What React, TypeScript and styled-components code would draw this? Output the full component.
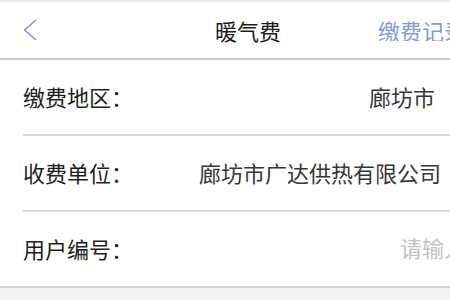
import styled, { createGlobalStyle } from 'styled-components';

const GlobalStyle = createGlobalStyle`
  html, body {
    margin: 0;
    padding: 0;
    background: #f1f1f1;
    overflow: hidden;
  }
  * {
    box-sizing: border-box;
  }
`;

const Page = styled.div`
  width: 450px;
  height: 300px;
  overflow: hidden;
  background: #f1f1f1;
  font-family: 'Noto Sans CJK SC', 'Noto Sans', sans-serif;
  border-top: 2px solid #e9e9e9;
`;

const NavBar = styled.div`
  height: 58px;
  display: grid;
  grid-template-columns: 192px 163px 1fr;
  align-items: center;
  padding-left: 23px;
  background: #fff;
  border-bottom: 2px solid #c9c9c9;
`;

const BackButton = styled.button`
  display: flex;
  align-items: center;
  width: 20px;
  height: 30px;
  padding: 0;
  border: none;
  background: none;
  color: #8394c3;
`;

const Title = styled.div`
  font-size: 22px;
  line-height: 1;
  color: #1c1c1c;
`;

const NavLink = styled.div`
  font-size: 22px;
  line-height: 1;
  color: #859bd0;
  white-space: nowrap;
  overflow: hidden;
`;

const Form = styled.div`
  background: #fff;
  border-bottom: 2px solid #d5d5d5;
`;

const Row = styled.div<{ $last?: boolean; $inset: number }>`
  height: ${({ $last }) => ($last ? 74 : 76)}px;
  margin-left: 23px;
  padding-right: ${({ $inset }) => $inset}px;
  display: grid;
  grid-template-columns: 1fr auto;
  align-items: center;
  border-bottom: ${({ $last }) => ($last ? 'none' : '2px solid #d9d9d9')};
`;

const Label = styled.div`
  font-size: 22px;
  line-height: 1;
  color: #1e1e1e;
  margin-top: -2px;
`;

const Value = styled.div`
  font-size: 22px;
  line-height: 1;
  color: #363636;
  margin-top: -2px;
`;

const Input = styled.input`
  width: 50px;
  margin: -4px 0 0;
  padding: 0;
  border: none;
  outline: none;
  background: transparent;
  font-family: inherit;
  font-size: 22px;
  color: #333;

  &::placeholder {
    color: #c3c3c3;
  }
`;

const ChevronLeft = () => (
  <svg width="14" height="22" viewBox="0 0 14 22" fill="none">
    <polyline
      points="12.5,1.5 1.5,11 12.5,20.5"
      stroke="currentColor"
      strokeWidth="1.6"
      strokeLinecap="round"
      strokeLinejoin="round"
    />
  </svg>
);

export default function App() {
  return (
    <Page>
      <GlobalStyle />
      <NavBar>
        <BackButton aria-label="返回">
          <ChevronLeft />
        </BackButton>
        <Title>暖气费</Title>
        <NavLink>缴费记录</NavLink>
      </NavBar>
      <Form>
        <Row $inset={15}>
          <Label>缴费地区：</Label>
          <Value>廊坊市</Value>
        </Row>
        <Row $inset={9}>
          <Label>收费单位：</Label>
          <Value>廊坊市广达供热有限公司</Value>
        </Row>
        <Row $inset={0} $last>
          <Label>用户编号：</Label>
          <Input placeholder="请输入用户编号" />
        </Row>
      </Form>
    </Page>
  );
}
